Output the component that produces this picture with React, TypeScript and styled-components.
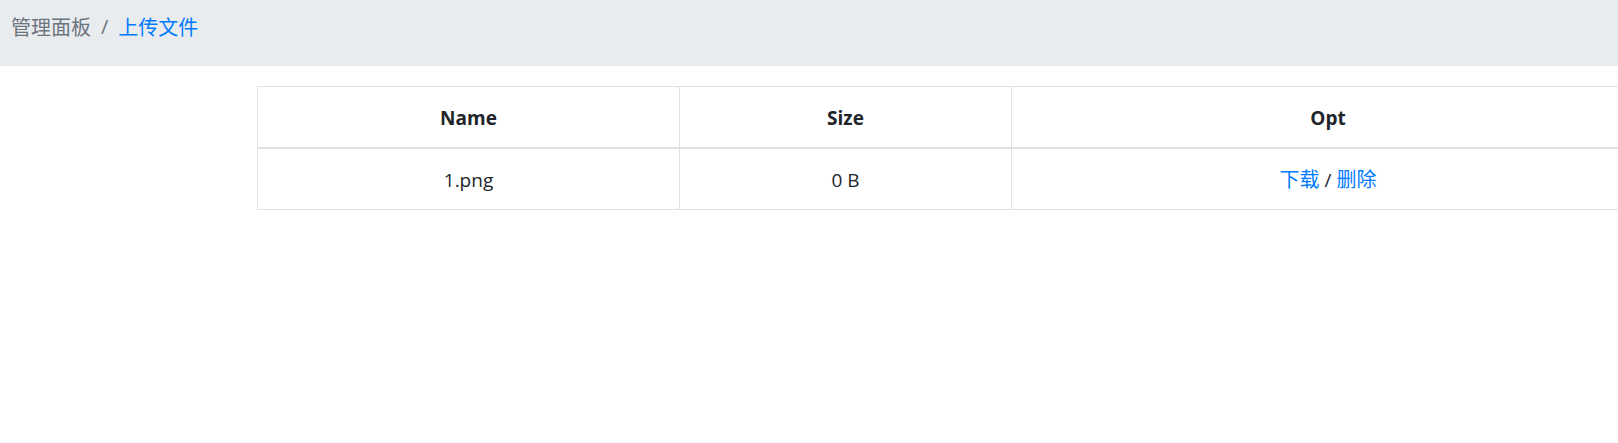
import React from "react";
import styled, { createGlobalStyle } from "styled-components";

const GlobalStyle = createGlobalStyle`
  html, body {
    margin: 0;
    padding: 0;
    background: #ffffff;
    overflow: hidden;
  }
  body {
    font-family: "Segoe UI", "Open Sans", "Noto Sans CJK SC", sans-serif;
    font-size: 20px;
    line-height: 30px;
    color: #212529;
  }
`;

const Page = styled.div`
  width: 1618px;
  overflow: hidden;
`;

const Breadcrumb = styled.ol`
  display: flex;
  align-items: center;
  list-style: none;
  margin: 0 0 20px 0;
  padding: 12px 11px 24px;
  height: 30px;
  background: #e9ecef;
  font-family: "Noto Sans CJK SC", "Open Sans", sans-serif;
  font-size: 20px;
  line-height: 30px;
`;

const Crumb = styled.li<{ $active?: boolean }>`
  color: ${(p) => (p.$active ? "#007bff" : "#6c757d")};
`;

const Separator = styled.li`
  color: #6c757d;
  padding: 0 10px;
  font-family: "Open Sans", sans-serif;
`;

const TableWrap = styled.div`
  padding-left: 257px;
`;

const Table = styled.table`
  width: 1388px;
  table-layout: fixed;
  border-collapse: collapse;
  color: #212529;
`;

const HeadCell = styled.th`
  border: 1px solid #dee2e6;
  border-bottom: 2px solid #dee2e6;
  padding: 16px 15px 14px;
  height: 30px;
  text-align: center;
  font-weight: 700;
  font-family: "Open Sans", sans-serif;
  font-size: 19px;
  line-height: 30px;
`;

const Cell = styled.td`
  border: 1px solid #dee2e6;
  padding: 15px 15px 14px;
  height: 30px;
  text-align: center;
  font-family: "Open Sans", "Noto Sans CJK SC", sans-serif;
  font-size: 19px;
  line-height: 30px;
`;

const Link = styled.a`
  color: #007bff;
  text-decoration: none;
  font-family: "Noto Sans CJK SC", sans-serif;
  font-size: 20px;
`;

export default function App() {
  return (
    <Page>
      <GlobalStyle />
      <Breadcrumb>
        <Crumb>管理面板</Crumb>
        <Separator>/</Separator>
        <Crumb $active>上传文件</Crumb>
      </Breadcrumb>
      <TableWrap>
        <Table>
          <colgroup>
            <col style={{ width: 422 }} />
            <col style={{ width: 332 }} />
            <col />
          </colgroup>
          <thead>
            <tr>
              <HeadCell>Name</HeadCell>
              <HeadCell>Size</HeadCell>
              <HeadCell>Opt</HeadCell>
            </tr>
          </thead>
          <tbody>
            <tr>
              <Cell>1.png</Cell>
              <Cell>0 B</Cell>
              <Cell>
                <Link href="#">下载</Link> / <Link href="#">删除</Link>
              </Cell>
            </tr>
          </tbody>
        </Table>
      </TableWrap>
    </Page>
  );
}
